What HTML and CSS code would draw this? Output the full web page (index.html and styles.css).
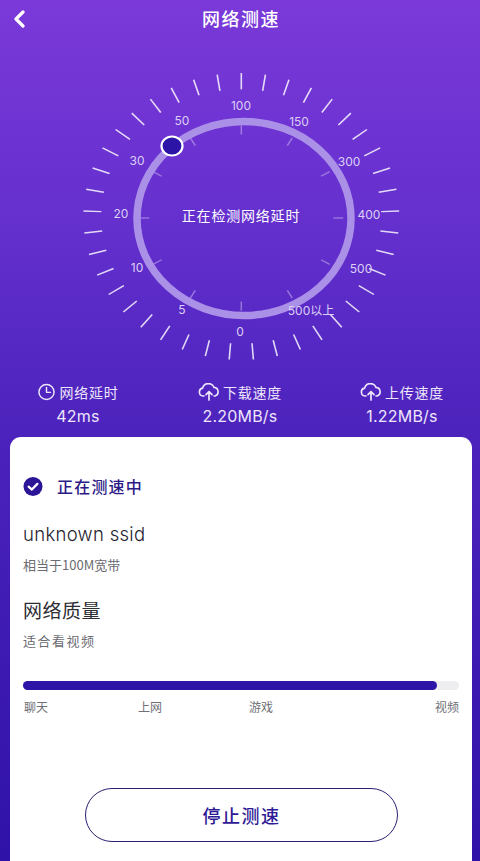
FILE: index.html
```html
<!DOCTYPE html>
<html lang="zh-CN">
<head>
<meta charset="utf-8">
<title>网络测速</title>
<link rel="stylesheet" href="styles.css">
</head>
<body>
<div class="page">
  <header class="topbar">
    <svg class="back" viewBox="0 0 14 18" width="14" height="18"><path d="M11 2 4 9l7 7" fill="none" stroke="#fff" stroke-width="3.2" stroke-linecap="round" stroke-linejoin="round"/></svg>
    <h1 class="title">网络测速</h1>
  </header>

  <svg class="gauge" viewBox="0 38 480 344" width="480" height="344">
    <g transform="translate(241.3 216.5) scale(1 .908)">
      <g class="ticks">
        <line y1="-158" y2="-140"/>
        <line y1="-158" y2="-140" transform="rotate(8.78)"/>
        <line y1="-158" y2="-140" transform="rotate(17.56)"/>
        <line y1="-158" y2="-140" transform="rotate(26.34)"/>
        <line y1="-158" y2="-140" transform="rotate(35.12)"/>
        <line y1="-158" y2="-140" transform="rotate(43.9)"/>
        <line y1="-158" y2="-140" transform="rotate(52.68)"/>
        <line y1="-158" y2="-140" transform="rotate(61.46)"/>
        <line y1="-158" y2="-140" transform="rotate(70.24)"/>
        <line y1="-158" y2="-140" transform="rotate(79.02)"/>
        <line y1="-158" y2="-140" transform="rotate(87.8)"/>
        <line y1="-158" y2="-140" transform="rotate(96.59)"/>
        <line y1="-158" y2="-140" transform="rotate(105.37)"/>
        <line y1="-158" y2="-140" transform="rotate(114.15)"/>
        <line y1="-158" y2="-140" transform="rotate(122.93)"/>
        <line y1="-158" y2="-140" transform="rotate(131.71)"/>
        <line y1="-158" y2="-140" transform="rotate(140.49)"/>
        <line y1="-158" y2="-140" transform="rotate(149.27)"/>
        <line y1="-158" y2="-140" transform="rotate(158.05)"/>
        <line y1="-158" y2="-140" transform="rotate(166.83)"/>
        <line y1="-158" y2="-140" transform="rotate(175.61)"/>
        <line y1="-158" y2="-140" transform="rotate(-8.78)"/>
        <line y1="-158" y2="-140" transform="rotate(-17.56)"/>
        <line y1="-158" y2="-140" transform="rotate(-26.34)"/>
        <line y1="-158" y2="-140" transform="rotate(-35.12)"/>
        <line y1="-158" y2="-140" transform="rotate(-43.9)"/>
        <line y1="-158" y2="-140" transform="rotate(-52.68)"/>
        <line y1="-158" y2="-140" transform="rotate(-61.46)"/>
        <line y1="-158" y2="-140" transform="rotate(-70.24)"/>
        <line y1="-158" y2="-140" transform="rotate(-79.02)"/>
        <line y1="-158" y2="-140" transform="rotate(-87.8)"/>
        <line y1="-158" y2="-140" transform="rotate(-96.59)"/>
        <line y1="-158" y2="-140" transform="rotate(-105.37)"/>
        <line y1="-158" y2="-140" transform="rotate(-114.15)"/>
        <line y1="-158" y2="-140" transform="rotate(-122.93)"/>
        <line y1="-158" y2="-140" transform="rotate(-131.71)"/>
        <line y1="-158" y2="-140" transform="rotate(-140.49)"/>
        <line y1="-158" y2="-140" transform="rotate(-149.27)"/>
        <line y1="-158" y2="-140" transform="rotate(-158.05)"/>
        <line y1="-158" y2="-140" transform="rotate(-166.83)"/>
        <line y1="-158" y2="-140" transform="rotate(-175.61)"/>
      </g>
    </g>
    <g transform="translate(241.3 218) scale(1 .908)">
      <g class="inner-ticks">
        <line y1="-102" y2="-92"/>
        <line y1="-102" y2="-92" transform="rotate(30)"/>
        <line y1="-102" y2="-92" transform="rotate(60)"/>
        <line y1="-102" y2="-92" transform="rotate(90)"/>
        <line y1="-102" y2="-92" transform="rotate(120)"/>
        <line y1="-102" y2="-92" transform="rotate(150)"/>
        <line y1="-102" y2="-92" transform="rotate(180)"/>
        <line y1="-102" y2="-92" transform="rotate(210)"/>
        <line y1="-102" y2="-92" transform="rotate(240)"/>
        <line y1="-102" y2="-92" transform="rotate(270)"/>
        <line y1="-102" y2="-92" transform="rotate(300)"/>
        <line y1="-102" y2="-92" transform="rotate(330)"/>
      </g>
    </g>
    <ellipse class="ring" cx="244" cy="218.5" rx="107" ry="97"/>
    <ellipse class="knob" cx="172" cy="146" rx="10.5" ry="9.5"/>
    <g class="scale">
      <text x="241" y="110">100</text>
      <text x="299" y="126">150</text>
      <text x="349" y="166">300</text>
      <text x="369" y="219">400</text>
      <text x="361" y="273">500</text>
      <text x="311" y="315">500以上</text>
      <text x="240" y="336">0</text>
      <text x="182" y="314">5</text>
      <text x="137" y="272">10</text>
      <text x="121" y="218">20</text>
      <text x="137" y="165">30</text>
      <text x="182" y="125">50</text>
    </g>
    <text class="status" x="241" y="221">正在检测网络延时</text>
  </svg>

  <section class="stats">
    <div class="stat">
      <div class="stat-label">
        <svg class="stat-icon" viewBox="0 0 20 20" width="19" height="18"><circle cx="10" cy="10" r="8.4" fill="none" stroke="#eee6fb" stroke-width="1.6"/><path d="M10 5v5.4h4.4" fill="none" stroke="#eee6fb" stroke-width="1.6" stroke-linecap="round" stroke-linejoin="round"/></svg>
        <span>网络延时</span>
      </div>
      <div class="stat-value">42ms</div>
    </div>
    <div class="stat">
      <div class="stat-label">
        <svg class="stat-icon" viewBox="0 0 22 18" width="22" height="18"><path d="M6 13H5a4 4 0 0 1-.4-7.9A6 6 0 0 1 16 4.4 4.4 4.4 0 0 1 17 13h-1" fill="none" stroke="#eee6fb" stroke-width="1.6" stroke-linecap="round"/><path d="M11 17V9M8 11.6 11 8.6l3 3" fill="none" stroke="#eee6fb" stroke-width="1.7" stroke-linecap="round" stroke-linejoin="round"/></svg>
        <span>下载速度</span>
      </div>
      <div class="stat-value">2.20MB/s</div>
    </div>
    <div class="stat">
      <div class="stat-label">
        <svg class="stat-icon" viewBox="0 0 22 18" width="22" height="18"><path d="M6 13H5a4 4 0 0 1-.4-7.9A6 6 0 0 1 16 4.4 4.4 4.4 0 0 1 17 13h-1" fill="none" stroke="#eee6fb" stroke-width="1.6" stroke-linecap="round"/><path d="M11 17V9M8 11.6 11 8.6l3 3" fill="none" stroke="#eee6fb" stroke-width="1.7" stroke-linecap="round" stroke-linejoin="round"/></svg>
        <span>上传速度</span>
      </div>
      <div class="stat-value">1.22MB/s</div>
    </div>
  </section>

  <main class="card">
    <div class="state">
      <svg class="check" viewBox="0 0 20 20" width="20" height="19"><circle cx="10" cy="10" r="10" fill="#2c1596"/><path d="M5.4 10.2 8.800 13.200 14.600 7.200" fill="none" stroke="#fff" stroke-width="2.400" stroke-linecap="round" stroke-linejoin="round"/></svg>
      <span>正在测速中</span>
    </div>
    <div class="ssid">unknown ssid</div>
    <div class="note note-band">相当于100M宽带</div>
    <div class="quality">网络质量</div>
    <div class="note note-use">适合看视频</div>
    <div class="bar"><div class="bar-fill" style="width:95%"></div></div>
    <div class="bar-labels">
      <span>聊天</span><span>上网</span><span>游戏</span><span>视频</span>
    </div>
    <button class="stop" type="button">停止测速</button>
  </main>
</div>
</body>
</html>
```
FILE: styles.css
```css
* { box-sizing: border-box; }
html, body { margin: 0; padding: 0; }
body {
  font-family: "Inter", "Noto Sans CJK SC", sans-serif;
  width: 480px;
  height: 861px;
  overflow: hidden;
}
.page {
  width: 480px;
  height: 861px;
  overflow: hidden;
  background: linear-gradient(180deg, #7b39d9 0%, #6530ce 25%, #4c23bc 50%, #2f12a8 100%);
  display: flex;
  flex-direction: column;
}
.topbar {
  height: 38px;
  display: flex;
  align-items: center;
  justify-content: center;
  position: relative;
}
.back { position: absolute; left: 12px; top: 10px; }
.title {
  margin: 0 0 2px;
  font: 500 18px "Noto Sans CJK SC", sans-serif;
  letter-spacing: 1.5px;
  color: #fff;
  padding-left: 2px;
}
.gauge { display: block; flex: none; }
.ticks line {
  stroke: #fff;
  stroke-opacity: .82;
  stroke-width: 1.6;
}
.inner-ticks line {
  stroke: #c8b4f0;
  stroke-opacity: .55;
  stroke-width: 1.5;
}
.ring { fill: none; stroke: #ab90e8; stroke-width: 7.5; }
.knob { fill: #2c14a6; stroke: #fff; stroke-width: 2.2; }
.scale text {
  font: 400 12px "Inter", "Noto Sans CJK SC", sans-serif;
  fill: #dccff6;
  text-anchor: middle;
}
.status {
  font: 400 14px "Noto Sans CJK SC", sans-serif;
  letter-spacing: .8px;
  fill: #fff;
  text-anchor: middle;
}
.stats {
  height: 55px;
  flex: none;
  display: grid;
  grid-template-columns: 156px 168px 156px;
  color: #eee6fb;
}
.stat {
  display: flex;
  flex-direction: column;
  align-items: center;
}
.stat-label {
  display: flex;
  align-items: center;
  gap: 3px;
  height: 20px;
  font: 400 14px "Noto Sans CJK SC", sans-serif;
  letter-spacing: .8px;
}
.stat-value {
  margin-top: 2px;
  font: 400 16px/24px "Inter", sans-serif;
  letter-spacing: .2px;
}
.card {
  flex: 1;
  margin: 0 8px 0 10px;
  background: #fff;
  border-radius: 11px 11px 0 0;
  padding: 38px 13px 0 13px;
  display: flex;
  flex-direction: column;
}
.state {
  display: flex;
  align-items: center;
  gap: 14px;
  height: 22px;
  color: #2c1a86;
  font: 500 16px "Noto Sans CJK SC", sans-serif;
  letter-spacing: 1.2px;
}
.ssid {
  margin-top: 25px;
  font: 300 18.500px/24px "Inter", sans-serif;
  letter-spacing: .3px;
  color: #26242e;
}
.note {
  font: 400 13px/18px "Noto Sans CJK SC", sans-serif;
  color: #6b6b72;
}
.note-band { margin-top: 10px; }
.quality {
  margin-top: 23px;
  font: 400 19px/26px "Noto Sans CJK SC", sans-serif;
  letter-spacing: .5px;
  color: #2e2d33;
}
.note-use { margin-top: 9px; letter-spacing: 1.500px; }
.bar {
  margin: 31px 0 0;
  height: 9px;
  border-radius: 5px;
  background: #eeeef0;
}
.bar-fill { height: 100%; border-radius: 5px; background: #2f14a8; }
.bar-labels {
  margin-top: 8px;
  display: flex;
  justify-content: flex-start;
  font: 400 12px/18px "Noto Sans CJK SC", sans-serif;
  color: #707076;
}
.bar-labels span { width: 24px; flex: none; }
.bar-labels span:nth-child(1) { margin-left: 1px; }
.bar-labels span:nth-child(2) { margin-left: 90px; }
.bar-labels span:nth-child(3) { margin-left: 87px; }
.bar-labels span:nth-child(4) { margin-left: 162px; }
.stop {
  align-self: flex-start;
  margin: 72px 0 0 62px;
  width: 313px;
  height: 54px;
  border: 1.5px solid #2a2070;
  border-radius: 27px;
  background: #fff;
  color: #2f1a96;
  font: 500 18px "Noto Sans CJK SC", sans-serif;
  letter-spacing: 1.500px;
}
```
